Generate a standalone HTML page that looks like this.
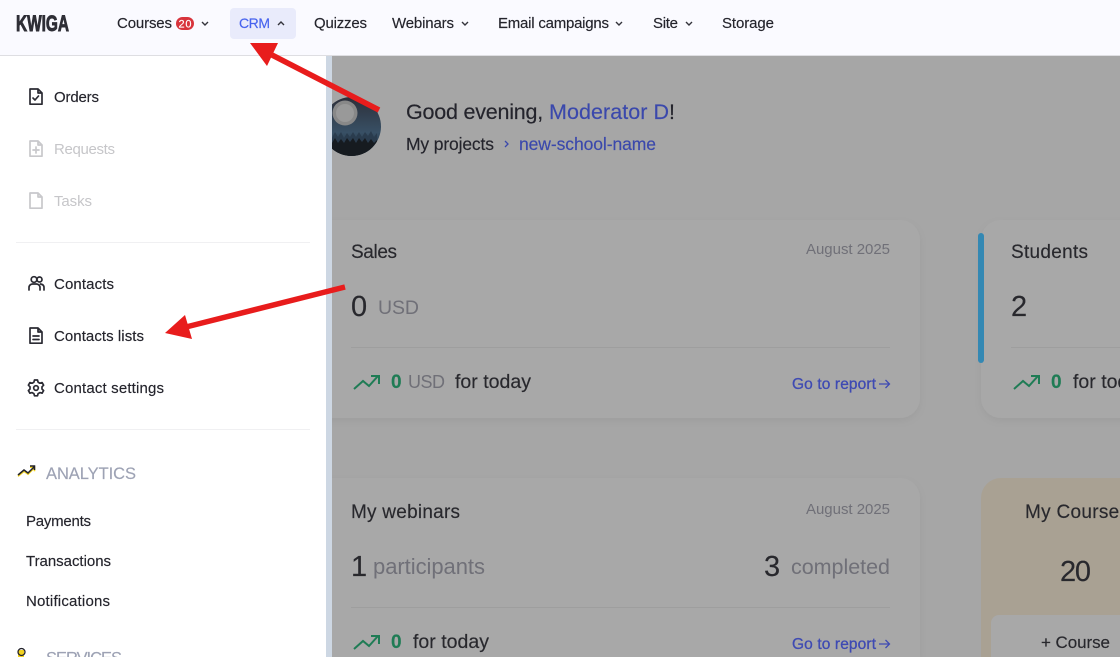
<!DOCTYPE html>
<html><head><meta charset="utf-8"><style>
html,body{margin:0;padding:0;width:1120px;height:657px;overflow:hidden;background:#a6a6a6}
svg{display:block;overflow:hidden}
text{font-family:"Liberation Sans",sans-serif;font-size:15px;fill:#24242c;white-space:pre;stroke:#24242c;stroke-width:.15px}
.g{fill:#c6c6c9;stroke:none}
.d{fill:#707078;stroke:none}
.b{fill:#3e4ab3;stroke:#3e4ab3;stroke-width:.3px}
.gr{fill:#1f7c55;stroke:#1f7c55;font-weight:bold}
.dk{fill:#28282d;stroke:#28282d}
.ic{fill:none;stroke:#2b2b33;stroke-width:1.7;stroke-linejoin:round;stroke-linecap:round}
.ig{fill:none;stroke:#c8c8cb;stroke-width:1.7;stroke-linejoin:round;stroke-linecap:round}
.tr{fill:none;stroke:#1f7c55;stroke-width:2}
.ch{fill:none;stroke:#33333b;stroke-width:1.4}
</style></head><body>
<svg width="1120" height="657" viewBox="0 0 1120 657" xmlns="http://www.w3.org/2000/svg">
<defs>
<filter id="s" x="-10%" y="-10%" width="120%" height="120%"><feDropShadow dx="0" dy="3" stdDeviation="4" flood-color="#000" flood-opacity=".05"/></filter>
<clipPath id="av"><circle cx="351.500" cy="126.500" r="29.500"/></clipPath>
<linearGradient id="sky" x1="0" y1="0" x2="0" y2="1"><stop offset="0" stop-color="#2c2e38"/><stop offset=".6" stop-color="#385065"/><stop offset="1" stop-color="#1d2a36"/></linearGradient>
</defs>
<rect width="1120" height="657" fill="#a6a6a6"/>

<!-- cards -->
<rect x="300" y="220" width="620" height="198" rx="20" fill="#a8a8a8" filter="url(#s)"/>
<rect x="981" y="220" width="200" height="198" rx="20" fill="#a8a8a8" filter="url(#s)"/>
<rect x="978" y="233" width="6" height="130" rx="3" fill="#3488b3"/>
<path d="M300 657V498a20 20 0 0 1 20-20H900a20 20 0 0 1 20 20V657Z" fill="#a8a8a8" filter="url(#s)"/>
<path d="M981 657V498a20 20 0 0 1 20-20H1120V657Z" fill="#a9a193"/>
<path d="M991 657V623a8 8 0 0 1 8-8H1120V657Z" fill="#a8a8a8"/>

<!-- avatar -->
<g clip-path="url(#av)">
<rect x="320" y="96" width="62" height="61" fill="url(#sky)"/>
<circle cx="345" cy="113" r="12.500" fill="#888"/><circle cx="345" cy="113" r="9" fill="#999"/>
<path d="M320 140l3-6 3 4 3-5 3 5 3-6 3 5 3-5 3 6 3-5 3 4 3-5 3 5 3-5 3 5 3-5 3 4 3-5 3 6 3-4v20h-62z" fill="#2a3c4e"/>
<path d="M320 145l3-4 3 3 3-5 3 4 3-5 3 5 3-4 3 4 3-5 3 4 3-4 3 5 3-5 3 4 3-4 3 5 3-4 3 4 3-3v16h-62z" fill="#161b20"/>
</g>

<!-- main text -->
<text x="406" y="119" style="font-size:21.500px" textLength="143" lengthAdjust="spacing">Good evening, </text>
<text x="549" y="119" style="font-size:21.500px;fill:#3a48ac;stroke:#3a48ac" textLength="120" lengthAdjust="spacing">Moderator D</text>
<text x="669" y="119" style="font-size:21.500px">!</text>
<text x="406" y="150" style="font-size:17.500px" textLength="88" lengthAdjust="spacing">My projects</text>
<path d="M505 141l3 3-3 3" fill="none" stroke="#3a48ac" stroke-width="1.300"/>
<text x="519" y="150" style="font-size:17.500px;fill:#3a48ac;stroke:#3a48ac" textLength="137" lengthAdjust="spacing">new-school-name</text>

<text x="351" y="258" style="font-size:19px" class="dk" textLength="46" lengthAdjust="spacing">Sales</text>
<text x="806" y="254" class="d" textLength="84" lengthAdjust="spacing">August 2025</text>
<text x="351" y="316" style="font-size:29px" class="dk">0</text>
<text x="378" y="314" style="font-size:19.500px" class="d" textLength="41" lengthAdjust="spacing">USD</text>
<rect x="351" y="347" width="539" height="1" fill="#9e9e9e"/>
<path class="tr" d="M354 389l9-8 6 5 9-10M371 376h8v8"/>
<text x="391" y="388" style="font-size:19px" class="gr">0</text>
<text x="408" y="388" style="font-size:18px" class="d" textLength="37" lengthAdjust="spacing">USD</text>
<text x="455" y="388" style="font-size:19.500px" class="dk" textLength="76" lengthAdjust="spacing">for today</text>
<text x="792" y="389" class="b" style="font-size:15.500px" textLength="84" lengthAdjust="spacing">Go to report</text>
<path d="M879 384h10M885.500 380l4 4-4 4" fill="none" stroke="#3e4ab3" stroke-width="1.300"/>

<text x="1011" y="258" style="font-size:19px" class="dk" textLength="77" lengthAdjust="spacing">Students</text>
<text x="1011" y="316" style="font-size:29px" class="dk">2</text>
<rect x="1011" y="347" width="109" height="1" fill="#9e9e9e"/>
<path class="tr" d="M1014 389l9-8 6 5 9-10M1031 376h8v8"/>
<text x="1051" y="388" style="font-size:19px" class="gr">0</text>
<text x="1073" y="388" style="font-size:19.500px" class="dk" textLength="76" lengthAdjust="spacing">for today</text>

<text x="351" y="518" style="font-size:19px" class="dk" textLength="109" lengthAdjust="spacing">My webinars</text>
<text x="806" y="514" class="d" textLength="84" lengthAdjust="spacing">August 2025</text>
<text x="351" y="576" style="font-size:29px" class="dk">1</text>
<text x="373" y="574" style="font-size:22px" class="d" textLength="112" lengthAdjust="spacing">participants</text>
<text x="764" y="576" style="font-size:29px" class="dk">3</text>
<text x="791" y="574" style="font-size:21.500px" class="d" textLength="99" lengthAdjust="spacing">completed</text>
<rect x="351" y="607" width="539" height="1" fill="#9e9e9e"/>
<path class="tr" d="M354 649l9-8 6 5 9-10M371 636h8v8"/>
<text x="391" y="648" style="font-size:19px" class="gr">0</text>
<text x="413" y="648" style="font-size:19.500px" class="dk" textLength="76" lengthAdjust="spacing">for today</text>
<text x="792" y="649" class="b" style="font-size:15.500px" textLength="84" lengthAdjust="spacing">Go to report</text>
<path d="M879 644h10M885.500 640l4 4-4 4" fill="none" stroke="#3e4ab3" stroke-width="1.300"/>

<text x="1025" y="518" style="font-size:19px" class="dk" textLength="104" lengthAdjust="spacing">My Courses</text>
<text x="1060" y="581" style="font-size:29px" class="dk" textLength="31" lengthAdjust="spacing">20</text>
<text x="1041" y="648" style="font-size:17px" class="dk" textLength="69" lengthAdjust="spacing">+ Course</text>

<!-- sidebar -->
<rect x="0" y="56" width="326" height="601" fill="#fff"/>
<rect x="326" y="56" width="6" height="601" fill="#cdd7e3"/>
<rect x="16" y="242" width="294" height="1" fill="#f0f0f2"/>
<rect x="16" y="429" width="294" height="1" fill="#f0f0f2"/>

<path class="ic" d="M30 89h8l4 4v11.200h-12zM38 89v4h4M33 98l2 2 3.500-4"/>
<text x="54" y="102" textLength="45" lengthAdjust="spacing">Orders</text>
<path class="ig" d="M30 141h8l4 4v11.200h-12zM38 141v4h4M36 147v6M33 150h6"/>
<text x="54" y="154" class="g" textLength="61" lengthAdjust="spacing">Requests</text>
<path class="ig" d="M30 193h8l4 4v11.200h-12zM38 193v4h4"/>
<text x="54" y="206" class="g" textLength="38" lengthAdjust="spacing">Tasks</text>

<path class="ic" d="M29 290v-2.500a3.500 3.500 0 0 1 3.500-3.500h4a3.500 3.500 0 0 1 3.500 3.500v2.500M40.500 284c2 .3 3.500 1.500 3.500 3.500v2.500"/>
<circle class="ic" cx="34" cy="279.500" r="2.800"/><circle class="ic" cx="39.500" cy="279.500" r="2.500"/>
<text x="54" y="289" textLength="60" lengthAdjust="spacing">Contacts</text>
<path class="ic" d="M30 328h8l4 4v11.200h-12zM38 328v4h4M33 336h6M33 339.500h6"/>
<text x="54" y="341" textLength="90" lengthAdjust="spacing">Contacts lists</text>
<path class="ic" d="M34.500 380h3l.6 2.200 1.800 1 2.200-.6 1.500 2.600-1.600 1.600v2.200l1.600 1.600-1.500 2.600-2.200-.6-1.800 1-.6 2.200h-3l-.6-2.200-1.800-1-2.200.6-1.500-2.600 1.600-1.600v-2.200l-1.600-1.600 1.500-2.600 2.200.6 1.800-1z"/>
<circle class="ic" cx="36" cy="388" r="2.300"/>
<text x="54" y="393" textLength="110" lengthAdjust="spacing">Contact settings</text>

<path d="M18 475l6-5 4 3 6-6M30 466h4.500v4" fill="none" stroke="#f2d21f" stroke-width="1.600" transform="translate(0,1.200)"/>
<path d="M18 475l6-5 4 3 6-6M30 466h4.500v4" fill="none" stroke="#22222a" stroke-width="1.500"/>
<text x="46" y="479" style="font-size:16.500px;fill:#9da2b4;stroke:#9da2b4" textLength="90" lengthAdjust="spacing">ANALYTICS</text>
<text x="26" y="526" textLength="65" lengthAdjust="spacing">Payments</text>
<text x="26" y="566" textLength="85" lengthAdjust="spacing">Transactions</text>
<text x="26" y="606" textLength="84" lengthAdjust="spacing">Notifications</text>
<path d="M18 650h6v7h-6z" fill="#f2d21f"/><circle cx="21.500" cy="652" r="3.500" fill="none" stroke="#22222a" stroke-width="1.300"/>
<text x="46" y="663.500" style="font-size:16.500px;fill:#9da2b4;stroke:#9da2b4" textLength="76" lengthAdjust="spacing">SERVICES</text>

<!-- header -->
<rect x="0" y="0" width="1120" height="55" fill="#fafaff"/>
<rect x="0" y="55" width="1120" height="1" fill="#dedee2"/>
<text x="16" y="31" textLength="53" lengthAdjust="spacingAndGlyphs" style="font-size:22px;font-weight:bold;fill:#2e2e36;stroke:#2e2e36;stroke-width:.9px">KWIGA</text>

<text x="117" y="28" textLength="55" lengthAdjust="spacing">Courses</text>
<rect x="176" y="17" width="18" height="13" rx="6.500" fill="#d8343c"/>
<text x="178.500" y="27.500" style="font-size:11px;fill:#fff;stroke:#fff" textLength="13" lengthAdjust="spacing">20</text>
<path class="ch" d="M202 22l3 3 3-3"/>
<rect x="230" y="8" width="66" height="31" rx="4" fill="#e9ebfb"/>
<text x="239" y="28" style="font-size:14px;fill:#4763ee;stroke:#4763ee" textLength="31" lengthAdjust="spacing">CRM</text>
<path class="ch" d="M278 25l3-3 3 3"/>
<text x="314" y="28" textLength="53" lengthAdjust="spacing">Quizzes</text>
<text x="392" y="28" textLength="62" lengthAdjust="spacing">Webinars</text>
<path class="ch" d="M462 22l3 3 3-3"/>
<text x="498" y="28" textLength="111" lengthAdjust="spacing">Email campaigns</text>
<path class="ch" d="M616 22l3 3 3-3"/>
<text x="653" y="28" textLength="25" lengthAdjust="spacing">Site</text>
<path class="ch" d="M686 22l3 3 3-3"/>
<text x="722" y="28" textLength="52" lengthAdjust="spacing">Storage</text>

<!-- arrows -->
<path d="M379 110L272 55" stroke="#e81c1c" stroke-width="5.500" fill="none"/>
<path d="M250 43L278 43L267 66Z" fill="#e81c1c"/>
<path d="M345 287L186 327" stroke="#e81c1c" stroke-width="5.500" fill="none"/>
<path d="M165 333L185 315L192 339Z" fill="#e81c1c"/>
</svg>
</body></html>
